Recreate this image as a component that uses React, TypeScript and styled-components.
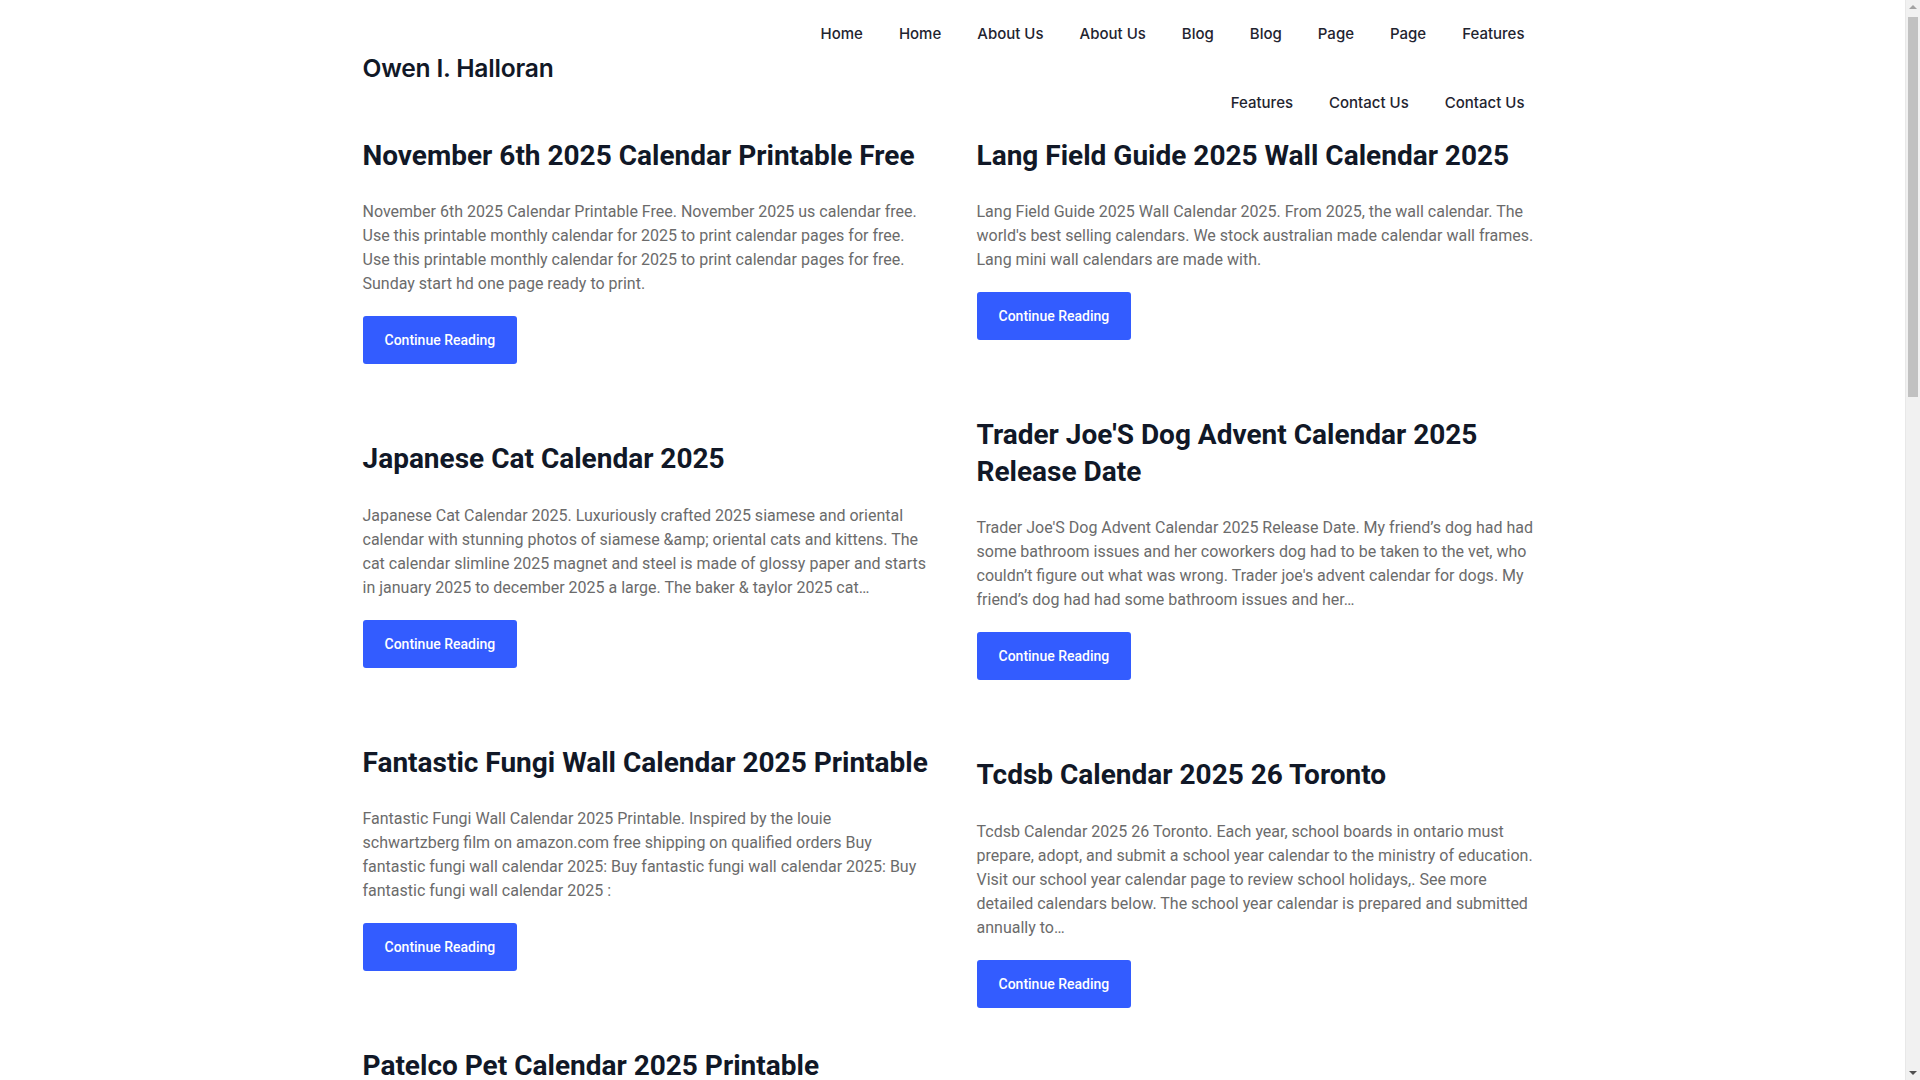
import styled, { createGlobalStyle } from 'styled-components'

const GlobalStyle = createGlobalStyle`
  html, body {
    margin: 0;
    padding: 0;
    background: #fff;
  }
  body {
    font-family: Roboto, "Liberation Sans", Arial, sans-serif;
    color: #111827;
  }
`

interface IPost {
  title: string
  excerpt: string
}

const posts: IPost[] = [
  {
    title: 'November 6th 2025 Calendar Printable Free',
    excerpt:
      'November 6th 2025 Calendar Printable Free. November 2025 us calendar free. Use this printable monthly calendar for 2025 to print calendar pages for free. Use this printable monthly calendar for 2025 to print calendar pages for free. Sunday start hd one page ready to print.',
  },
  {
    title: 'Lang Field Guide 2025 Wall Calendar 2025',
    excerpt:
      "Lang Field Guide 2025 Wall Calendar 2025. From 2025, the wall calendar. The world's best selling calendars. We stock australian made calendar wall frames. Lang mini wall calendars are made with.",
  },
  {
    title: 'Japanese Cat Calendar 2025',
    excerpt:
      'Japanese Cat Calendar 2025. Luxuriously crafted 2025 siamese and oriental calendar with stunning photos of siamese &amp; oriental cats and kittens. The cat calendar slimline 2025 magnet and steel is made of glossy paper and starts in january 2025 to december 2025 a large. The baker & taylor 2025 cat…',
  },
  {
    title: "Trader Joe'S Dog Advent Calendar 2025 Release Date",
    excerpt:
      "Trader Joe'S Dog Advent Calendar 2025 Release Date. My friend’s dog had had some bathroom issues and her coworkers dog had to be taken to the vet, who couldn’t figure out what was wrong. Trader joe's advent calendar for dogs. My friend’s dog had had some bathroom issues and her…",
  },
  {
    title: 'Fantastic Fungi Wall Calendar 2025 Printable',
    excerpt:
      'Fantastic Fungi Wall Calendar 2025 Printable. Inspired by the louie schwartzberg film on amazon.com free shipping on qualified orders Buy fantastic fungi wall calendar 2025: Buy fantastic fungi wall calendar 2025: Buy fantastic fungi wall calendar 2025 :',
  },
  {
    title: 'Tcdsb Calendar 2025 26 Toronto',
    excerpt:
      'Tcdsb Calendar 2025 26 Toronto. Each year, school boards in ontario must prepare, adopt, and submit a school year calendar to the ministry of education. Visit our school year calendar page to review school holidays,. See more detailed calendars below. The school year calendar is prepared and submitted annually to…',
  },
  {
    title: 'Patelco Pet Calendar 2025 Printable',
    excerpt:
      'Patelco Pet Calendar 2025 Printable. Submit your pet photo for a chance to be featured in the patelco pet calendar. Print the monthly pages at home and keep track of every date that matters…',
  },
]

const navItems = [
  'Home',
  'Home',
  'About Us',
  'About Us',
  'Blog',
  'Blog',
  'Page',
  'Page',
  'Features',
  'Features',
  'Contact Us',
  'Contact Us',
]

// Page keeps room for the browser scrollbar seen in the reference
const Page = styled.div`
  padding-right: 15px;
`

const ScrollTrack = styled.div`
  position: fixed;
  top: 0;
  right: 0;
  width: 15px;
  height: 100vh;
  background: #f1f1f1;
  border-left: 1px solid #e8e8e8;
  box-sizing: border-box;
`

const ScrollThumb = styled.div`
  position: absolute;
  top: 17px;
  left: 2px;
  right: 2px;
  height: 380px;
  background: #c1c1c1;
`

const ScrollArrow = styled.div<{ down?: boolean }>`
  position: absolute;
  left: 3px;
  ${(props) => (props.down ? 'bottom: 5px;' : 'top: 5px;')}
  width: 0;
  height: 0;
  border-left: 4px solid transparent;
  border-right: 4px solid transparent;
  ${(props) =>
    props.down ? 'border-top: 4px solid #505050;' : 'border-bottom: 4px solid #a3a3a3;'}
`

const Container = styled.div`
  max-width: 1180px;
  margin: 0 auto;
`

const Header = styled.header`
  display: flex;
  align-items: center;
  justify-content: space-between;
`

const SiteTitle = styled.a`
  padding-bottom: 2px;
  font-family: Inter, Roboto, sans-serif;
  font-size: 24.6px;
  font-weight: 600;
  color: #111827;
  text-decoration: none;
  letter-spacing: -0.2px;
`

const Nav = styled.nav`
  width: 800px;
  display: flex;
  flex-wrap: wrap;
  justify-content: flex-end;
`

const NavLink = styled.a`
  display: block;
  padding: 24px 18px 26px;
  line-height: 19px;
  font-family: Inter, Roboto, sans-serif;
  font-size: 15px;
  font-weight: 500;
  color: #1f2430;
  text-decoration: none;
  cursor: pointer;
`

const Grid = styled.main`
  display: grid;
  grid-template-columns: 1fr 1fr;
  column-gap: 48px;
  align-items: start;
`

const Column = styled.div`
  display: flex;
  flex-direction: column;
`

const Article = styled.article`
  margin-bottom: 77px;
`

const PostTitle = styled.h2`
  margin: 0 0 26px;
  font-family: Roboto, sans-serif;
  font-size: 28px;
  line-height: 1.3;
  font-weight: 700;
  color: #111827;
`

const Excerpt = styled.p`
  margin: 0 0 20px;
  font-family: Roboto, sans-serif;
  font-size: 16px;
  line-height: 24px;
  color: #6b6b6b;
`

const ReadButton = styled.a`
  display: inline-flex;
  align-items: center;
  justify-content: center;
  height: 48px;
  padding: 0 22px;
  border-radius: 3px;
  background: #335cff;
  color: #fff;
  font-family: Roboto, sans-serif;
  font-size: 14px;
  font-weight: 500;
  text-decoration: none;
  cursor: pointer;
`

const Post = ({ post }: { post: IPost }) => (
  <Article>
    <PostTitle>{post.title}</PostTitle>
    <Excerpt>{post.excerpt}</Excerpt>
    <ReadButton>Continue Reading</ReadButton>
  </Article>
)

export default function App() {
  const left = posts.filter((_, i) => i % 2 === 0)
  const right = posts.filter((_, i) => i % 2 === 1)

  return (
    <Page>
      <GlobalStyle />
      <Container>
        <Header>
          <SiteTitle>Owen I. Halloran</SiteTitle>
          <Nav>
            {navItems.map((item, i) => (
              <NavLink key={i}>{item}</NavLink>
            ))}
          </Nav>
        </Header>
        <Grid>
          <Column>
            {left.map((p) => (
              <Post key={p.title} post={p} />
            ))}
          </Column>
          <Column>
            {right.map((p) => (
              <Post key={p.title} post={p} />
            ))}
          </Column>
        </Grid>
      </Container>
      <ScrollTrack>
        <ScrollArrow />
        <ScrollThumb />
        <ScrollArrow down />
      </ScrollTrack>
    </Page>
  )
}
